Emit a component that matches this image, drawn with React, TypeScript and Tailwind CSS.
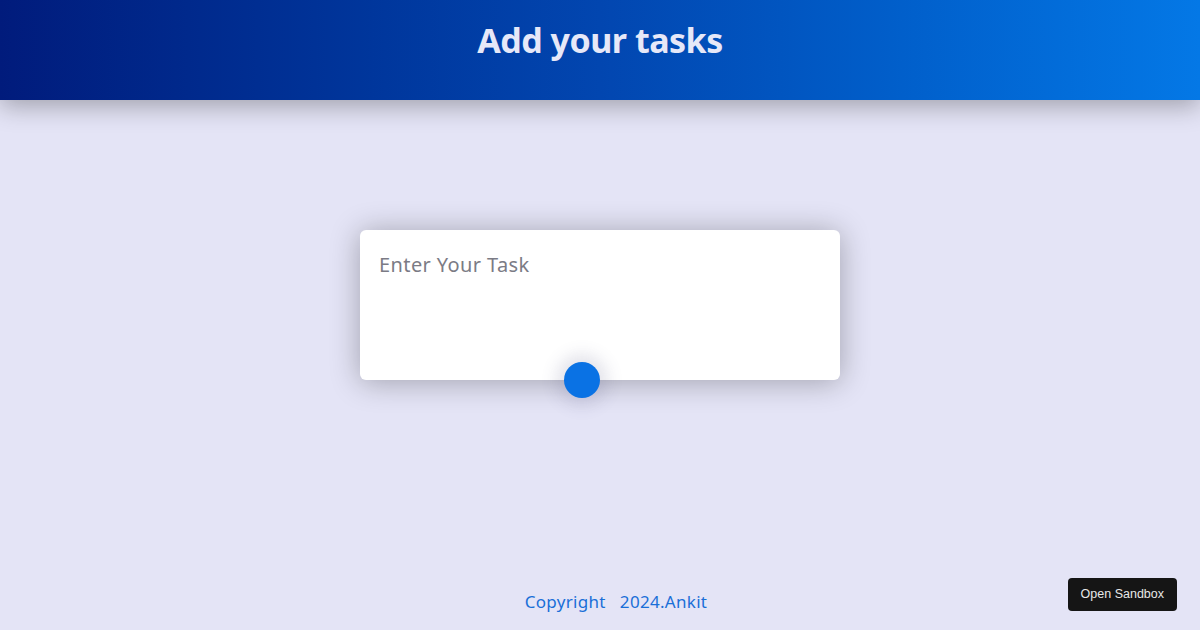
export default function App() {
  return (
    <div
      className="relative flex h-[630px] w-[1200px] flex-col bg-[#e4e4f6]"
      style={{ fontFamily: '"Noto Sans", "Open Sans", sans-serif' }}
    >
      <header className="flex h-[100px] items-center justify-center bg-gradient-to-r from-[#011b7c] via-[#0246b0] to-[#0478e6] shadow-[0_6px_24px_rgba(0,0,0,0.3)]">
        <h1 className="-mt-[20px] text-[34px] font-bold tracking-[-0.5px] text-[#e6e8f8]">Add your tasks</h1>
      </header>

      <main className="flex flex-1 justify-center pt-[130px]">
        <div className="relative h-[150px] w-[480px] rounded-[6px] bg-white shadow-[0_2px_30px_rgba(0,0,0,0.3)]">
          <textarea
            placeholder="Enter Your Task"
            className="h-full w-full resize-none rounded-[6px] bg-transparent px-[19px] pt-[20px] text-[20px] tracking-[0.4px] text-[#333] placeholder-[#7b7b85] outline-none"
            autoFocus
          />
          <button className="absolute left-[204px] top-[132px] h-[36px] w-[36px] rounded-full bg-[#0a72e4] shadow-[0_0_16px_8px_rgba(90,90,130,0.16)]" />
        </div>
      </main>

      <footer className="flex justify-center pb-[16px] pl-[32px]">
        <p className="text-[17px] tracking-[0.3px] text-[#1a6fd8]">
          Copyright&nbsp;&nbsp;&nbsp;2024.Ankit
        </p>
      </footer>

      <button
        className="absolute bottom-[19px] right-[23px] rounded-[4px] bg-[#151515] px-[13px] py-[7px] text-[12.5px] text-[#e8e8e8]"
        style={{ fontFamily: '"Liberation Sans", Arial, sans-serif' }}
      >
        Open Sandbox
      </button>
    </div>
  );
}
